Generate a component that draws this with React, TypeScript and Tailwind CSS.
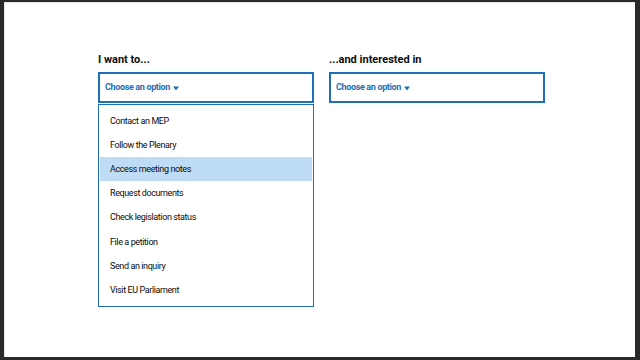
import React from "react";

const items = [
  "Contact an MEP",
  "Follow the Plenary",
  "Access meeting notes",
  "Request documents",
  "Check legislation status",
  "File a petition",
  "Send an inquiry",
  "Visit EU Parliament",
];

function Trigger() {
  return (
    <div className="h-[31px] w-[216px] border-2 border-[#1d70b8] flex items-center pl-[5px]">
      <span className="text-[9px] font-bold text-[#1d70b8] tracking-[-0.35px]">Choose an option</span>
      <svg width="6" height="5" viewBox="0 0 6 5" className="ml-[3px] mt-[1px]">
        <path d="M0 0.5 L6 0.5 L3 4.5 Z" fill="#1d70b8" />
      </svg>
    </div>
  );
}

export default function App() {
  return (
    <div className="w-[640px] h-[360px] bg-[#2a2a2a] pt-[2px] pl-[4px] pr-[5px] pb-[3px]" style={{ fontFamily: "Roboto, 'Noto Sans', sans-serif" }}>
      <div className="w-full h-full bg-white border-t border-l border-[#e6e6e6] pt-[48px] pl-[93px] flex gap-[15px]">
        <div className="flex flex-col">
          <div className="text-[11px] font-bold text-[#0b0c0c] h-[21px] leading-[18px]">I want to...</div>
          <Trigger />
          <div className="mt-[1px] w-[216px] border border-[#1d70b8] pt-[4px] pb-[4px] px-[1px] flex flex-col">
            {items.map((t, i) => (
              <div
                key={t}
                className={`h-[24.15px] flex items-center pl-[10px] pt-[1px] text-[9px] tracking-[-0.4px] text-[#0b0c0c] ${i === 2 ? "bg-[#bfdcf6]" : ""}`}
              >
                {t}
              </div>
            ))}
          </div>
        </div>
        <div className="flex flex-col">
          <div className="text-[11px] font-bold text-[#0b0c0c] h-[21px] leading-[18px]">...and interested in</div>
          <Trigger />
        </div>
      </div>
    </div>
  );
}
